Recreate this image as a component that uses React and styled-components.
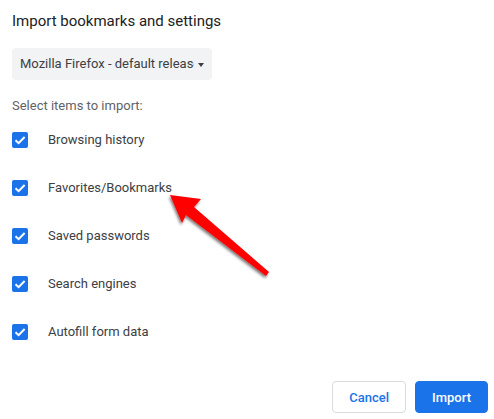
import React from "react";
import styled, { createGlobalStyle } from "styled-components";

const Global = createGlobalStyle`
  html, body { margin: 0; padding: 0; background: #ffffff; }
  body { font-family: Roboto, "Liberation Sans", Arial, sans-serif; -webkit-font-smoothing: antialiased; }
  * { box-sizing: border-box; }
`;

const Page = styled.div`
  position: relative;
  width: 494px;
  height: 419px;
  overflow: hidden;
  padding: 11px 6px 0 12px;
  display: flex;
  flex-direction: column;
`;

const Title = styled.h1`
  margin: 0;
  font-size: 15px;
  line-height: 20px;
  font-weight: 400;
  color: #202124;
`;

const Select = styled.div`
  margin-top: 17px;
  width: 200px;
  height: 32px;
  border-radius: 4px;
  background: #f1f3f4;
  display: flex;
  align-items: center;
  gap: 4px;
  padding: 0 8px;
`;

const SelectText = styled.span`
  flex: 1;
  min-width: 0;
  overflow: hidden;
  white-space: nowrap;
  font-size: 13px;
  color: #3c4043;
  line-height: 32px;
`;

const Caret = styled.span`
  width: 0;
  height: 0;
  border-left: 3.5px solid transparent;
  border-right: 3.5px solid transparent;
  border-top: 4px solid #3c4043;
  margin-top: 1px;
`;

const Hint = styled.div`
  margin-top: 18px;
  font-size: 13px;
  line-height: 16px;
  color: #5f6368;
`;

const List = styled.div`
  margin-top: 2px;
  display: flex;
  flex-direction: column;
`;

const Row = styled.label`
  height: 48px;
  display: flex;
  align-items: center;
  gap: 20px;
  font-size: 13px;
  line-height: 16px;
  color: #3c4043;
`;

const Box = styled.span`
  width: 16px;
  height: 16px;
  border-radius: 2px;
  background: ${(p) => (p.checked ? "#1a73e8" : "#fff")};
  border: ${(p) => (p.checked ? "none" : "2px solid #5f6368")};
  display: flex;
  align-items: center;
  justify-content: center;
`;

const Footer = styled.div`
  margin-top: 25px;
  display: flex;
  justify-content: flex-end;
  gap: 9px;
`;

const Button = styled.button`
  height: 32px;
  padding: 0 16px;
  border-radius: 4px;
  font-family: Roboto, "Liberation Sans", Arial, sans-serif;
  font-size: 13px;
  font-weight: 500;
  border: 1px solid ${(p) => (p.primary ? "#1a73e8" : "#dadce0")};
  background: ${(p) => (p.primary ? "#1a73e8" : "#ffffff")};
  color: ${(p) => (p.primary ? "#ffffff" : "#1a73e8")};
`;

const Overlay = styled.svg`
  position: absolute;
  left: 0;
  top: 0;
  pointer-events: none;
`;

const items = [
  "Browsing history",
  "Favorites/Bookmarks",
  "Saved passwords",
  "Search engines",
  "Autofill form data",
];

function Check() {
  return (
    <svg width="16" height="16" viewBox="0 0 16 16">
      <path d="M3.5 8.2 L6.6 11.2 L12.6 5" fill="none" stroke="#fff" strokeWidth="2" />
    </svg>
  );
}

export default function App() {
  return (
    <>
      <Global />
      <Page>
        <Title>Import bookmarks and settings</Title>
        <Select>
          <SelectText>Mozilla Firefox - default release</SelectText>
          <Caret />
        </Select>
        <Hint>Select items to import:</Hint>
        <List>
          {items.map((t) => (
            <Row key={t}>
              <Box checked>
                <Check />
              </Box>
              {t}
            </Row>
          ))}
        </List>
        <Footer>
          <Button>Cancel</Button>
          <Button primary>Import</Button>
        </Footer>
        <Overlay width="494" height="419" viewBox="0 0 494 419">
          <defs>
            <filter id="sh" x="-20%" y="-20%" width="140%" height="140%">
              <feDropShadow dx="-1" dy="2" stdDeviation="1.5" floodColor="#000" floodOpacity="0.55" />
            </filter>
          </defs>
          <polygon
            points="170,195 201,199 194,207 269,272 266,276 186,215 182,223"
            fill="#ff0000"
            filter="url(#sh)"
          />
        </Overlay>
      </Page>
    </>
  );
}
